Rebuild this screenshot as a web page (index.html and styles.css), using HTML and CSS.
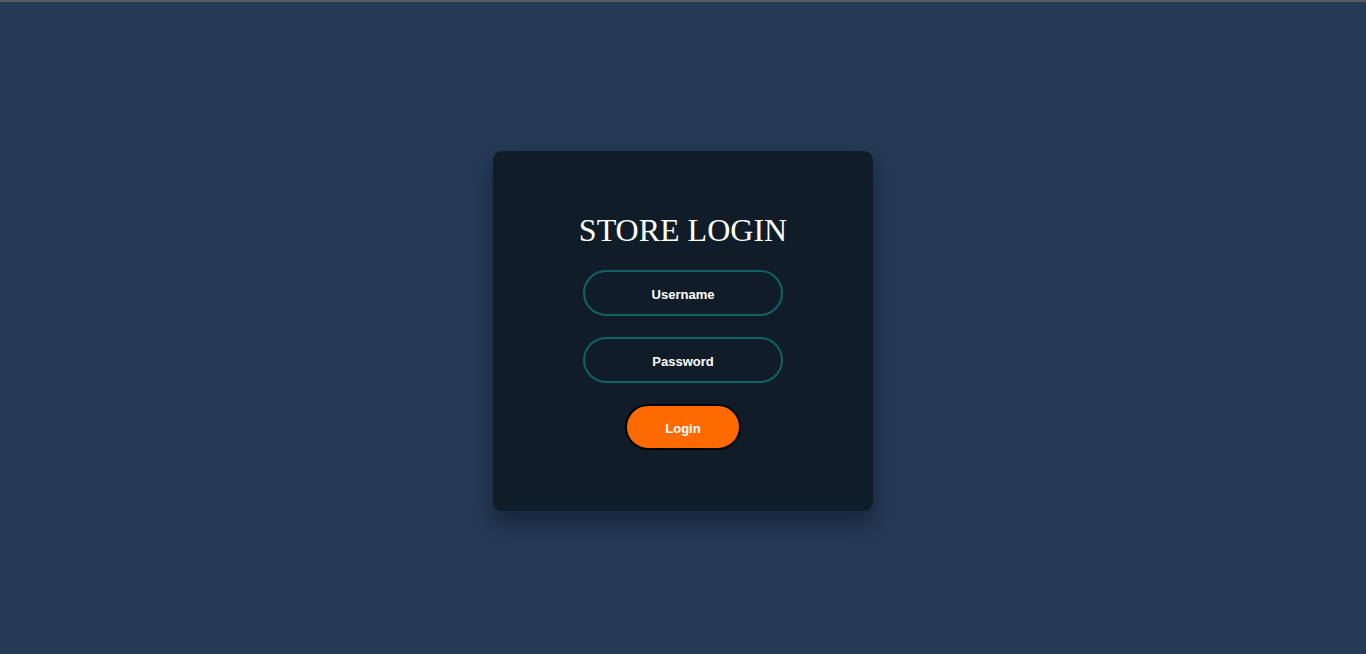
FILE: index.html
```html
<!DOCTYPE html>
<html>
<head>
<meta charset="utf-8">
<link rel="stylesheet" href="styles.css">
</head>
<body>
<div class="topline"></div>
<main class="page">
  <form class="card">
    <h1 class="title">STORE LOGIN</h1>
    <input class="field" type="text" placeholder="Username">
    <input class="field" type="password" placeholder="Password">
    <button class="btn" type="button">Login</button>
  </form>
</main>
</body>
</html>
```
FILE: styles.css
```css
* { box-sizing: border-box; }
html, body { margin: 0; padding: 0; height: 100%; }
body {
  background: #243a55;
  display: flex;
  flex-direction: column;
}
.topline { height: 2px; background: #5a5a5a; flex: none; }
.page {
  flex: 1;
  display: flex;
  align-items: center;
  justify-content: center;
  padding-top: 5px;
}
.card {
  width: 380px;
  height: 360px;
  background: #111c29;
  border-radius: 9px;
  box-shadow: 0 12px 20px rgba(8, 14, 22, 0.45);
  display: flex;
  flex-direction: column;
  align-items: center;
  padding-top: 59px;
}
.title {
  margin: 0 0 20px;
  font-family: "Liberation Serif", "Times New Roman", serif;
  font-weight: normal;
  font-size: 32px;
  line-height: 40px;
  color: #ffffff;
}
.field {
  width: 200px;
  height: 46px;
  border: 2px solid #0e6363;
  border-radius: 24px;
  background: transparent;
  color: #fff;
  text-align: center;
  font-family: "Liberation Sans", Arial, sans-serif;
  font-weight: bold;
  font-size: 13px;
  padding: 3px 0 0;
  margin-bottom: 21px;
  outline: none;
}
.field::placeholder { color: #ffffff; opacity: 1; }
.btn {
  margin-top: 0;
  width: 116px;
  height: 46px;
  border: 2px solid #000;
  border-radius: 24px;
  background: #ff6a00;
  color: #fff;
  font-family: "Liberation Sans", Arial, sans-serif;
  font-weight: bold;
  font-size: 13px;
  padding: 3px 0 0;
}
```
